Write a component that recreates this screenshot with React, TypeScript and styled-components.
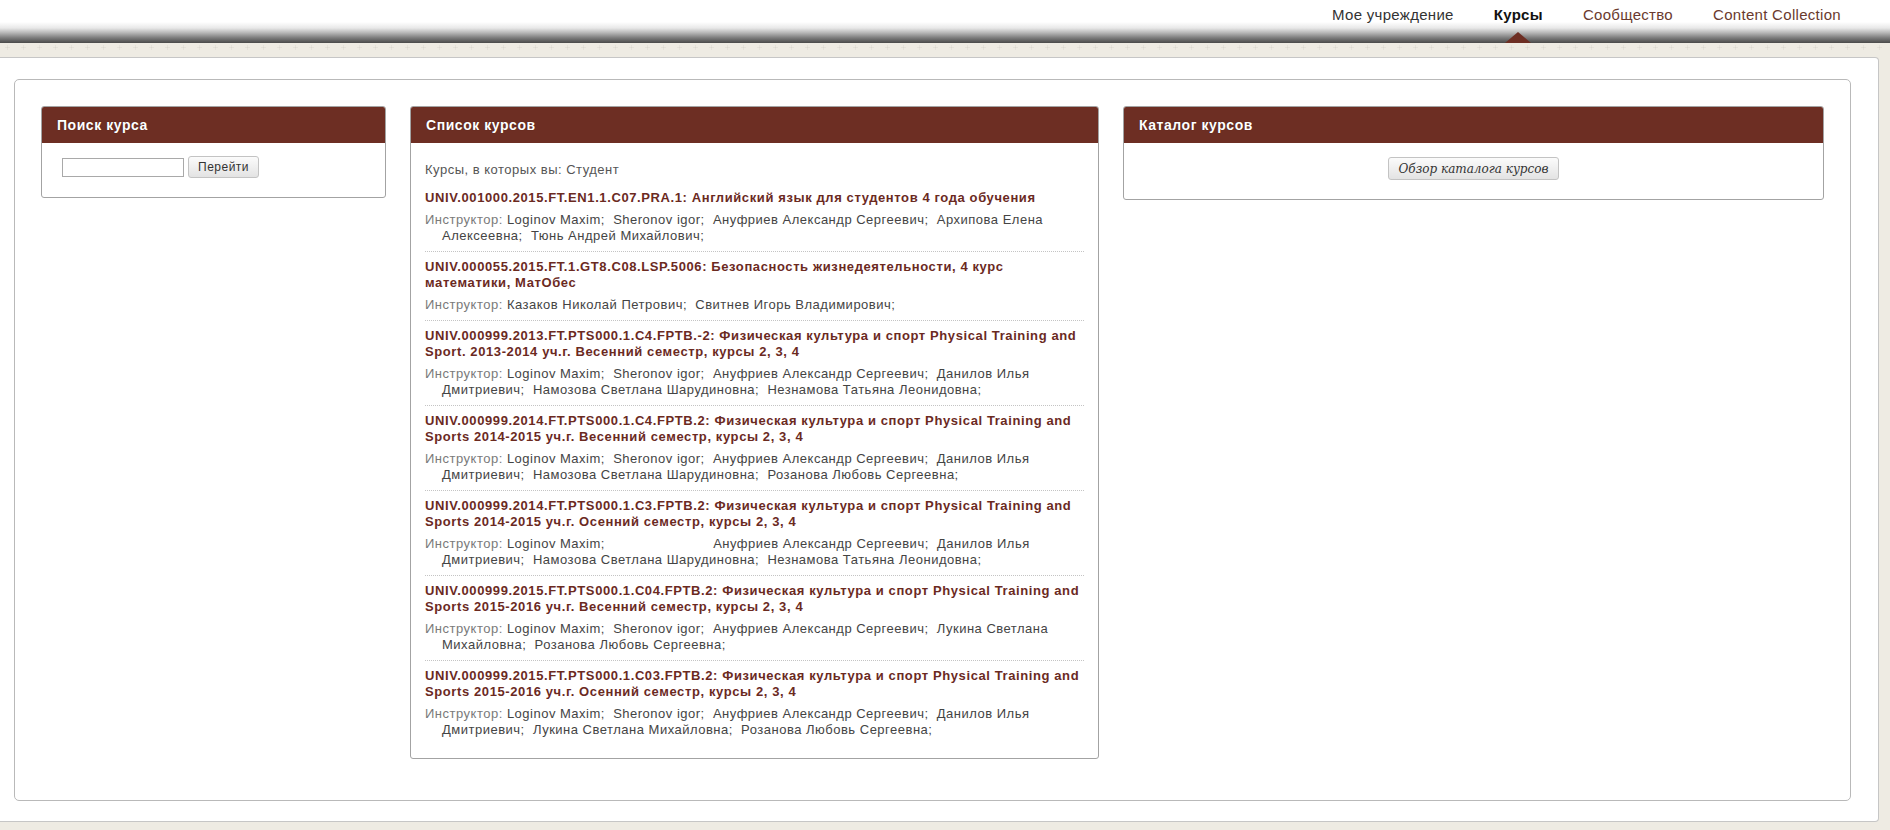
import React from "react";
import styled, { createGlobalStyle } from "styled-components";

const GlobalStyle = createGlobalStyle`
	html, body {
		margin: 0;
		padding: 0;
		background: #eeebe3;
	}
	body {
		font-family: "Liberation Sans", Arial, sans-serif;
		font-size: 13px;
		letter-spacing: 0.5px;
		color: #333;
	}
`;

//data
const navItems = [
	{ label: "Мое учреждение", tone: "plain" },
	{ label: "Курсы", tone: "active" },
	{ label: "Сообщество", tone: "link" },
	{ label: "Content Collection", tone: "link" },
];

// an empty string is an instructor entry with no visible name (leaves a blank slot)
const courses = [
	{
		title: "UNIV.001000.2015.FT.EN1.1.C07.PRA.1: Английский язык для студентов 4 года обучения",
		instructors: ["Loginov Maxim", "Sheronov igor", "Ануфриев Александр Сергеевич", "Архипова Елена Алексеевна", "Тюнь Андрей Михайлович"],
	},
	{
		title: "UNIV.000055.2015.FT.1.GT8.C08.LSP.5006: Безопасность жизнедеятельности, 4 курс математики, МатОбес",
		instructors: ["Казаков Николай Петрович", "Свитнев Игорь Владимирович"],
	},
	{
		title: "UNIV.000999.2013.FT.PTS000.1.C4.FPTB.-2: Физическая культура и спорт Physical Training and Sport. 2013-2014 уч.г. Весенний семестр, курсы 2, 3, 4",
		instructors: ["Loginov Maxim", "Sheronov igor", "Ануфриев Александр Сергеевич", "Данилов Илья Дмитриевич", "Намозова Светлана Шарудиновна", "Незнамова Татьяна Леонидовна"],
	},
	{
		title: "UNIV.000999.2014.FT.PTS000.1.C4.FPTB.2: Физическая культура и спорт Physical Training and Sports 2014-2015 уч.г. Весенний семестр, курсы 2, 3, 4",
		instructors: ["Loginov Maxim", "Sheronov igor", "Ануфриев Александр Сергеевич", "Данилов Илья Дмитриевич", "Намозова Светлана Шарудиновна", "Розанова Любовь Сергеевна"],
	},
	{
		title: "UNIV.000999.2014.FT.PTS000.1.C3.FPTB.2: Физическая культура и спорт Physical Training and Sports 2014-2015 уч.г. Осенний семестр, курсы 2, 3, 4",
		instructors: ["Loginov Maxim", "", "Ануфриев Александр Сергеевич", "Данилов Илья Дмитриевич", "Намозова Светлана Шарудиновна", "Незнамова Татьяна Леонидовна"],
	},
	{
		title: "UNIV.000999.2015.FT.PTS000.1.C04.FPTB.2: Физическая культура и спорт Physical Training and Sports 2015-2016 уч.г. Весенний семестр, курсы 2, 3, 4",
		instructors: ["Loginov Maxim", "Sheronov igor", "Ануфриев Александр Сергеевич", "Лукина Светлана Михайловна", "Розанова Любовь Сергеевна"],
	},
	{
		title: "UNIV.000999.2015.FT.PTS000.1.C03.FPTB.2: Физическая культура и спорт Physical Training and Sports 2015-2016 уч.г. Осенний семестр, курсы 2, 3, 4",
		instructors: ["Loginov Maxim", "Sheronov igor", "Ануфриев Александр Сергеевич", "Данилов Илья Дмитриевич", "Лукина Светлана Михайловна", "Розанова Любовь Сергеевна"],
	},
];

// groups the names into runs of text, split where a blank entry sits
function toRuns(names: string[]) {
	const runs: string[] = [""];
	names.forEach((name) => {
		if (name) runs[runs.length - 1] += name + ";\u00a0 ";
		else runs.push("");
	});
	return runs;
}

//layout
const Page = styled.div`
	min-height: 100vh;
	background-color: #eeebe3;
	display: flex;
	flex-flow: column nowrap;
`;
const Header = styled.header`
	height: 43px;
	background: linear-gradient(
		to bottom,
		#ffffff 0px,
		#ffffff 22px,
		#e8e8e8 28px,
		#b4b4b4 33px,
		#7a7a7a 38px,
		#4a4a4a 43px
	);
	display: flex;
	justify-content: flex-end;
	padding-right: 49px;
	gap: 40px;
`;
const NavItem = styled.a<{ $tone: string }>`
	position: relative;
	height: 43px;
	line-height: 29px;
	font-family: "Liberation Sans", Arial, sans-serif;
	font-size: 15px;
	letter-spacing: 0.3px;
	cursor: pointer;
	font-weight: ${(p) => (p.$tone === "active" ? "bold" : "normal")};
	color: ${(p) => (p.$tone === "active" ? "#111" : p.$tone === "link" ? "#6a3a2e" : "#333")};
`;
const NavArrow = styled.span`
	position: absolute;
	left: 50%;
	bottom: 0;
	transform: translateX(-50%);
	width: 0;
	height: 0;
	border-left: 13px solid transparent;
	border-right: 13px solid transparent;
	border-bottom: 11px solid #6d2e23;
`;
const Main = styled.main`
	flex: 1;
	padding: 14px 11px 8px 0;
	background-image:
		linear-gradient(to right, transparent 5px, rgba(0, 0, 0, 0.04) 5px, rgba(0, 0, 0, 0.04) 10px, transparent 10px),
		linear-gradient(to right, transparent 7px, rgba(0, 0, 0, 0.04) 7px, rgba(0, 0, 0, 0.04) 8px, transparent 8px);
	background-size: 16px 1px, 16px 5px;
	background-position: 0 4px, 0 2px;
	background-repeat: repeat-x;
`;
const Outer = styled.div`
	background: #fff;
	border: 1px solid #c6c6c6;
	border-left: none;
	border-radius: 0 4px 4px 0;
	padding: 21px 27px 20px 14px;
`;
const Inner = styled.div`
	border: 1px solid #b9b9b9;
	border-radius: 5px;
	padding: 26px 26px 41px;
	display: grid;
	grid-template-columns: 345px 689px 1fr;
	gap: 24px;
	align-items: start;
`;

//modules
const Module = styled.section`
	border: 1px solid #a3a3a3;
	border-radius: 3px;
	background: #fff;
	overflow: hidden;
`;
const ModuleTitle = styled.h2`
	margin: 0;
	height: 36px;
	padding: 0 15px;
	display: flex;
	align-items: center;
	background-color: #6d2e23;
	color: #fff;
	font-family: "Liberation Sans", Arial, sans-serif;
	font-size: 14px;
	letter-spacing: 0.55px;
	font-weight: bold;
	text-shadow: 0 0 1px rgba(0, 0, 0, 0.4);
`;
const ModuleBody = styled.div<{ $pad: string; $center?: boolean }>`
	padding: ${(p) => p.$pad};
	display: flex;
	flex-flow: column nowrap;
	align-items: ${(p) => (p.$center ? "center" : "stretch")};
`;

//search form
const SearchRow = styled.form`
	display: flex;
	flex-flow: row nowrap;
	align-items: center;
	gap: 4px;
`;
const SearchInput = styled.input`
	box-sizing: border-box;
	width: 122px;
	height: 19px;
	border: 1px solid #a9a9a9;
	padding: 1px 3px;
	margin: 0;
`;
const GreyButton = styled.button<{ $serif?: boolean }>`
	box-sizing: border-box;
	height: ${(p) => (p.$serif ? "23px" : "22px")};
	padding: ${(p) => (p.$serif ? "0 10px" : "0 9px")};
	margin: 0;
	border: 1px solid #c3c3c3;
	border-radius: 3px;
	background: linear-gradient(to bottom, #fbfbfb, #e3e3e3);
	color: #333;
	font-family: ${(p) => (p.$serif ? '"DejaVu Serif", Georgia, serif' : '"Liberation Sans", Arial, sans-serif')};
	font-style: ${(p) => (p.$serif ? "italic" : "normal")};
	letter-spacing: ${(p) => (p.$serif ? "0" : "0.5px")};
	font-size: 12px;
	cursor: pointer;
`;

//course list
const RoleLine = styled.div`
	line-height: 16px;
	color: #555;
	margin-bottom: 12px;
`;
const CourseList = styled.ul`
	list-style: none;
	margin: 0;
	padding: 0;
`;
const CourseItem = styled.li`
	padding: 7px 0;
	border-bottom: 1px dotted #c4c4c4;
	&:first-child {
		padding-top: 0;
	}
	&:last-child {
		padding-bottom: 0;
		border-bottom: none;
	}
`;
const CourseTitle = styled.a`
	display: block;
	line-height: 16px;
	font-weight: bold;
	letter-spacing: 0.6px;
	color: #6b2a1f;
	cursor: pointer;
`;
const Instructors = styled.div`
	margin-top: 6px;
	line-height: 16px;
	padding-left: 17px;
	text-indent: -17px;
	color: #444;
`;
const Label = styled.span`
	color: #7a7a7a;
`;
const BlankName = styled.span`
	display: inline-block;
	width: 100px;
	text-indent: 0;
`;

export default function App() {
	return (
		<Page>
			<GlobalStyle />
			<Header>
				{navItems.map((item) => (
					<NavItem key={item.label} $tone={item.tone}>
						{item.label}
						{item.tone === "active" && <NavArrow />}
					</NavItem>
				))}
			</Header>
			<Main>
				<Outer>
					<Inner>
						<Module>
							<ModuleTitle>Поиск курса</ModuleTitle>
							<ModuleBody $pad="13px 20px 19px">
								<SearchRow onSubmit={(e) => e.preventDefault()}>
									<SearchInput type="text" />
									<GreyButton type="submit">Перейти</GreyButton>
								</SearchRow>
							</ModuleBody>
						</Module>

						<Module>
							<ModuleTitle>Список курсов</ModuleTitle>
							<ModuleBody $pad="19px 14px 20px">
								<RoleLine>Курсы, в которых вы: Студент</RoleLine>
								<CourseList>
									{courses.map((course, i) => (
										<CourseItem key={i}>
											<CourseTitle>{course.title}</CourseTitle>
											<Instructors>
												<Label>Инструктор: </Label>
												{toRuns(course.instructors).map((run, j) => (
													<React.Fragment key={j}>
														{j > 0 && <BlankName />}
														{run}
													</React.Fragment>
												))}
											</Instructors>
										</CourseItem>
									))}
								</CourseList>
							</ModuleBody>
						</Module>

						<Module>
							<ModuleTitle>Каталог курсов</ModuleTitle>
							<ModuleBody $pad="14px 15px 19px" $center>
								<GreyButton $serif>Обзор каталога курсов</GreyButton>
							</ModuleBody>
						</Module>
					</Inner>
				</Outer>
			</Main>
		</Page>
	);
}
